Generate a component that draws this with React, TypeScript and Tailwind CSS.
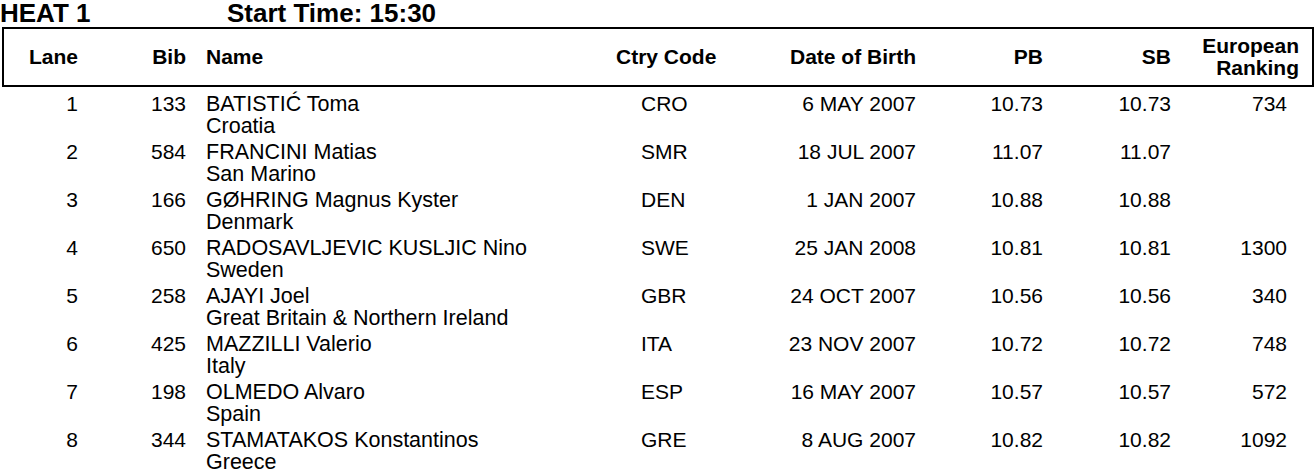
const rows = [
  { lane: 1, bib: 133, name: "BATISTIĆ Toma", country: "Croatia", code: "CRO", dob: "6 MAY 2007", pb: "10.73", sb: "10.73", rank: "734" },
  { lane: 2, bib: 584, name: "FRANCINI Matias", country: "San Marino", code: "SMR", dob: "18 JUL 2007", pb: "11.07", sb: "11.07", rank: "" },
  { lane: 3, bib: 166, name: "GØHRING Magnus Kyster", country: "Denmark", code: "DEN", dob: "1 JAN 2007", pb: "10.88", sb: "10.88", rank: "" },
  { lane: 4, bib: 650, name: "RADOSAVLJEVIC KUSLJIC Nino", country: "Sweden", code: "SWE", dob: "25 JAN 2008", pb: "10.81", sb: "10.81", rank: "1300" },
  { lane: 5, bib: 258, name: "AJAYI Joel", country: "Great Britain & Northern Ireland", code: "GBR", dob: "24 OCT 2007", pb: "10.56", sb: "10.56", rank: "340" },
  { lane: 6, bib: 425, name: "MAZZILLI Valerio", country: "Italy", code: "ITA", dob: "23 NOV 2007", pb: "10.72", sb: "10.72", rank: "748" },
  { lane: 7, bib: 198, name: "OLMEDO Alvaro", country: "Spain", code: "ESP", dob: "16 MAY 2007", pb: "10.57", sb: "10.57", rank: "572" },
  { lane: 8, bib: 344, name: "STAMATAKOS Konstantinos", country: "Greece", code: "GRE", dob: "8 AUG 2007", pb: "10.82", sb: "10.82", rank: "1092" },
];

const App = () => {
  return (
    <div className="w-[1316px] h-[475px] overflow-hidden bg-white text-black font-['Liberation_Sans',Arial,sans-serif]">
      <div className="flex h-[27px] items-start text-[26px] font-bold leading-[26px] whitespace-nowrap">
        <div className="w-[227px]">HEAT 1</div>
        <div>Start Time: 15:30</div>
      </div>

      <div className="ml-[2px] w-[1312px] h-[60px] border-2 border-black flex items-center text-[21px] font-bold leading-[22px] whitespace-nowrap">
        <div className="w-[74px] text-right">Lane</div>
        <div className="w-[108px] text-right">Bib</div>
        <div className="w-[430px] pl-[20px]">Name</div>
        <div className="w-[100px]">Ctry Code</div>
        <div className="w-[200px] text-right">Date of Birth</div>
        <div className="w-[127px] text-right">PB</div>
        <div className="w-[128px] text-right">SB</div>
        <div className="w-[128px] text-right">
          European
          <br />
          Ranking
        </div>
      </div>

      <div className="mt-[6px] ml-[4px] text-[21px] leading-[22px] whitespace-nowrap">
        {rows.map((r) => (
          <div key={r.lane} className="flex h-[48px]">
            <div className="w-[74px] text-right">{r.lane}</div>
            <div className="w-[108px] text-right">{r.bib}</div>
            <div className="w-[430px] pl-[20px] text-[21.5px]">
              <div>{r.name}</div>
              <div>{r.country}</div>
            </div>
            <div className="w-[100px] pl-[25px]">{r.code}</div>
            <div className="w-[200px] text-right">{r.dob}</div>
            <div className="w-[127px] text-right">{r.pb}</div>
            <div className="w-[128px] text-right">{r.sb}</div>
            <div className="w-[128px] text-right pr-[12px]">{r.rank}</div>
          </div>
        ))}
      </div>
    </div>
  );
};

export default App;
